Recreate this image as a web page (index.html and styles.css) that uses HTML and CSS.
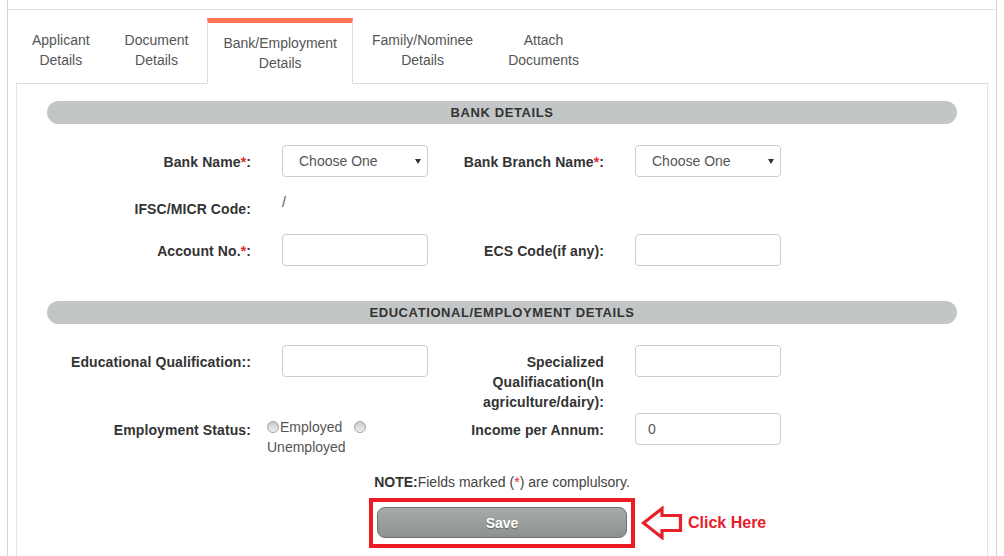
FILE: index.html
```html
<!DOCTYPE html>
<html lang="en">
<head>
    <meta charset="UTF-8">
    <meta name="viewport" content="width=device-width, initial-scale=1.0">
    <title>Bank/Employment Details</title>
    <link rel="stylesheet" href="styles.css">
</head>
<body>
    <div class="page">
        <div class="page-top"></div>

        <div class="tabs-wrap">
            <ul class="nav-tabs">
                <li class="tab"><a>Applicant<br>Details</a></li>
                <li class="tab"><a>Document<br>Details</a></li>
                <li class="tab active"><a>Bank/Employment<br>Details</a></li>
                <li class="tab"><a>Family/Nominee<br>Details</a></li>
                <li class="tab"><a>Attach<br>Documents</a></li>
            </ul>

            <div class="tab-panel">
                <div class="section-head">BANK DETAILS</div>

                <div class="form-row">
                    <label class="control-label">Bank Name<span class="req">*</span>:</label>
                    <div class="select"><span>Choose One</span><span class="caret"></span></div>
                    <label class="control-label">Bank Branch Name<span class="req">*</span>:</label>
                    <div class="select"><span>Choose One</span><span class="caret"></span></div>
                </div>

                <div class="form-row">
                    <label class="control-label">IFSC/MICR Code:</label>
                    <div class="static-value">/</div>
                </div>

                <div class="form-row">
                    <label class="control-label">Account No.<span class="req">*</span>:</label>
                    <div class="input"></div>
                    <label class="control-label">ECS Code(if any):</label>
                    <div class="input"></div>
                </div>

                <div class="section-head spaced">EDUCATIONAL/EMPLOYMENT DETAILS</div>

                <div class="form-row compact">
                    <label class="control-label">Educational Qualification::</label>
                    <div class="input"></div>
                    <label class="control-label">Specialized Qualifiacation(In agriculture/dairy):</label>
                    <div class="input"></div>
                </div>

                <div class="form-row">
                    <label class="control-label">Employment Status:</label>
                    <div class="radio-group">
                        <span class="radio"></span>Employed <span class="radio second"></span> Unemployed
                    </div>
                    <label class="control-label">Income per Annum:</label>
                    <div class="input">0</div>
                </div>

                <p class="note"><b>NOTE:</b>Fields marked (<span class="req">*</span>) are complulsory.</p>

                <div class="save-wrap">
                    <div class="highlight">
                        <button class="btn-save">Save</button>
                    </div>
                    <div class="callout">
                        <svg width="42" height="34" viewBox="0 0 42 34">
                            <polygon points="2.5,17 21,2.5 21,9.5 39.5,9.5 39.5,24.5 21,24.5 21,31.5" fill="#fff" stroke="#e8202a" stroke-width="3.2" stroke-linejoin="miter"/>
                        </svg>
                        <span class="callout-text">Click Here</span>
                    </div>
                </div>
            </div>
        </div>
    </div>
</body>
</html>
```

FILE: styles.css
```css
* {
    margin: 0;
    padding: 0;
    box-sizing: border-box;
}

body {
    font-family: 'Liberation Sans', Arial, Helvetica, sans-serif;
    font-size: 14px;
    line-height: 20px;
    color: #555;
    background-color: #fff;
}

.page {
    margin: 0 7px;
    min-height: 556px;
    border-left: 1px solid #d6d6d6;
    border-right: 1px solid #d6d6d6;
}

.page-top {
    height: 10px;
    border-bottom: 1px solid #e2e2e2;
}

.tabs-wrap {
    padding: 8px 8px 0;
}

/* tabs */

.nav-tabs {
    list-style: none;
    display: flex;
    align-items: flex-start;
    gap: 3px;
    border-bottom: 1px solid #dcdcdc;
}

.tab a {
    display: block;
    padding: 11px 15px 10px;
    border: 1px solid transparent;
    text-align: center;
    color: #555;
}

.tab {
    margin-bottom: -1px;
}

.tab.active a {
    padding-top: 10px;
    background-color: #fff;
    border-color: #dcdcdc;
    border-top: 5px solid #ff7350;
    border-bottom-color: #fff;
}

/* panel */

.tab-panel {
    min-height: 480px;
    padding: 17px 30px 20px;
    border: 1px solid #e3e5ec;
    border-top: none;
}

.section-head {
    height: 23px;
    margin-bottom: 21px;
    border-radius: 12px;
    background-color: #c3c6c6;
    color: #333;
    font-size: 13px;
    font-weight: bold;
    letter-spacing: 0.6px;
    line-height: 23px;
    text-align: center;
}

.section-head.spaced {
    margin-top: 35px;
}

.form-row {
    display: grid;
    grid-template-columns: 235px 146px 207px 146px;
    align-items: start;
    margin-bottom: 15px;
}

.form-row.compact {
    margin-bottom: 1px;
}

.control-label {
    padding: 7px 31px 0 0;
    text-align: right;
    font-weight: bold;
    letter-spacing: 0.1px;
    color: #333;
}

.req {
    color: #e8262b;
}

.input,
.select {
    height: 32px;
    border: 1px solid #ccc;
    border-radius: 4px;
    background-color: #fff;
    color: #555;
    line-height: 30px;
}

.input {
    padding-left: 12px;
}

.select {
    display: flex;
    align-items: center;
    justify-content: space-between;
    padding: 0 6px 0 16px;
}

.caret {
    width: 0;
    height: 0;
    border-left: 3px solid transparent;
    border-right: 3px solid transparent;
    border-top: 5px solid #333;
}

.static-value {
    color: #555;
}

.radio-group {
    margin-left: -15px;
    padding-top: 4px;
    color: #555;
}

.radio {
    display: inline-block;
    width: 12px;
    height: 12px;
    margin-right: 1px;
    border: 1px solid #a2a2a2;
    border-radius: 50%;
    background: linear-gradient(#c9c9c9, #f0f0f0);
    vertical-align: -1px;
}

.radio.second {
    margin-left: 8px;
}

.note {
    text-align: center;
    color: #444;
}

.note b {
    color: #333;
}

/* save + annotation */

.save-wrap {
    position: relative;
    width: 266px;
    margin: 6px auto 0;
}

.highlight {
    padding: 5px 4px 6px;
    border: 4px solid #ed1c24;
}

.btn-save {
    display: block;
    width: 250px;
    height: 31px;
    border: 1px solid #6e7270;
    border-radius: 8px;
    background: linear-gradient(#a7aba9, #8d918f);
    color: #fff;
    font-family: inherit;
    font-size: 14px;
    font-weight: bold;
    text-shadow: 0 1px 1px rgba(0, 0, 0, 0.35);
}

.callout {
    position: absolute;
    left: 272px;
    top: 8px;
    display: flex;
    align-items: center;
    gap: 5px;
}

.callout svg {
    display: block;
}

.callout-text {
    color: #e8202a;
    font-size: 16px;
    font-weight: bold;
    white-space: nowrap;
}
```
